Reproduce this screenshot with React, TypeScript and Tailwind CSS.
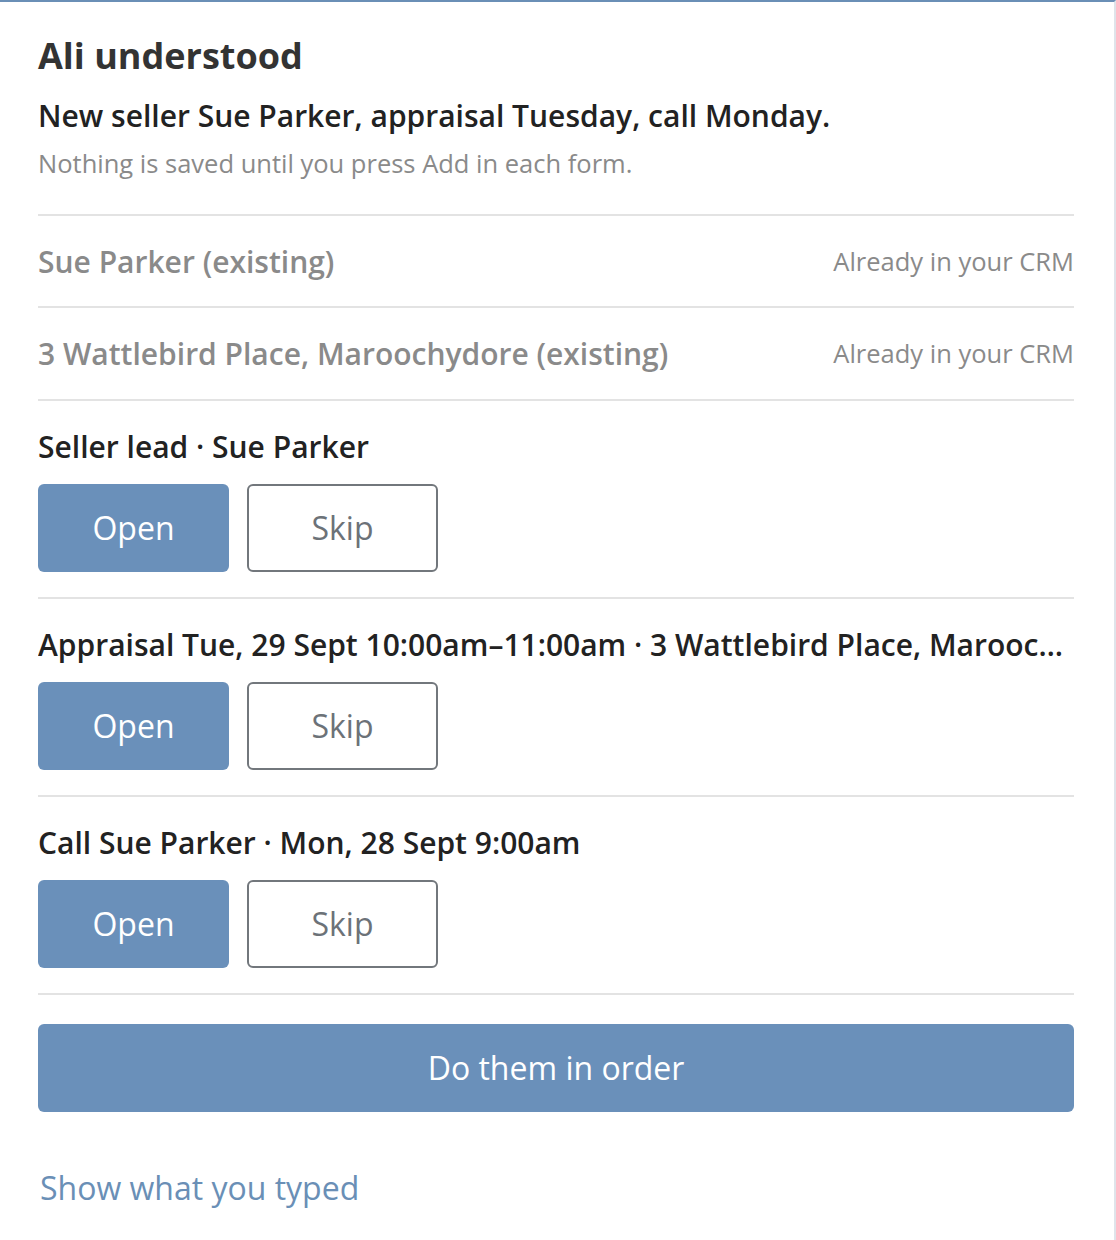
import React from "react";

const existing = [
  { label: "Sue Parker (existing)", note: "Already in your CRM", h: "h-[92px]" },
  { label: "3 Wattlebird Place, Maroochydore (existing)", note: "Already in your CRM", h: "h-[93px]" },
];

const actions = [
  { id: 1, title: "Seller lead · Sue Parker" },
  { id: 2, title: "Appraisal Tue, 29 Sept 10:00am–11:00am · 3 Wattlebird Place, Maroochydore" },
  { id: 3, title: "Call Sue Parker · Mon, 28 Sept 9:00am" },
];

const App: React.FC = () => {
  return (
    <div
      className="min-h-screen bg-white border-t-2 border-t-[#6a8fb6] border-r-2 border-r-[#dfe4ea]"
      style={{ fontFamily: '"Open Sans", "Noto Sans", sans-serif' }}
    >
      <div className="pl-[38px] pr-[40px] pt-[30px]">
        <h1 className="text-[36px] leading-[48px] font-bold text-[#333333]">Ali understood</h1>
        <p className="mt-[16px] text-[30px] leading-[40px] font-semibold text-[#222222]">
          New seller Sue Parker, appraisal Tuesday, call Monday.
        </p>
        <p className="mt-[10px] text-[25.5px] leading-[34px] text-[#8a8a8a]">
          Nothing is saved until you press Add in each form.
        </p>

        <div className="mt-[34px] border-t-2 border-[#e3e3e3]">
          {existing.map((row) => (
            <div
              key={row.label}
              className={`flex items-center justify-between border-b-2 border-[#e3e3e3] ${row.h}`}
            >
              <span className="text-[30px] font-semibold text-[#8a8a8a]">{row.label}</span>
              <span className="text-[25.5px] text-[#8a8a8a]">{row.note}</span>
            </div>
          ))}

          {actions.map((a) => (
            <div key={a.id} className="border-b-2 border-[#e3e3e3] pt-[26px] pb-[25px]">
              <div className="text-[30px] leading-[40px] font-semibold text-[#222222] truncate">
                {a.title}
              </div>
              <div className="mt-[17px] flex gap-[18px]">
                <button className="w-[191px] h-[88px] rounded-[6px] bg-[#6a90ba] text-white text-[32px]">
                  Open
                </button>
                <button className="w-[191px] h-[88px] rounded-[6px] border-2 border-[#72777c] bg-white text-[#6c7278] text-[32px]">
                  Skip
                </button>
              </div>
            </div>
          ))}
        </div>

        <button className="mt-[29px] w-full h-[88px] rounded-[6px] bg-[#6a90ba] text-white text-[32px]">
          Do them in order
        </button>

        <div className="mt-[54px] text-[32px] leading-[44px] text-[#6a8fb6] pl-[2px]">
          Show what you typed
        </div>
      </div>
    </div>
  );
};

export default App;
